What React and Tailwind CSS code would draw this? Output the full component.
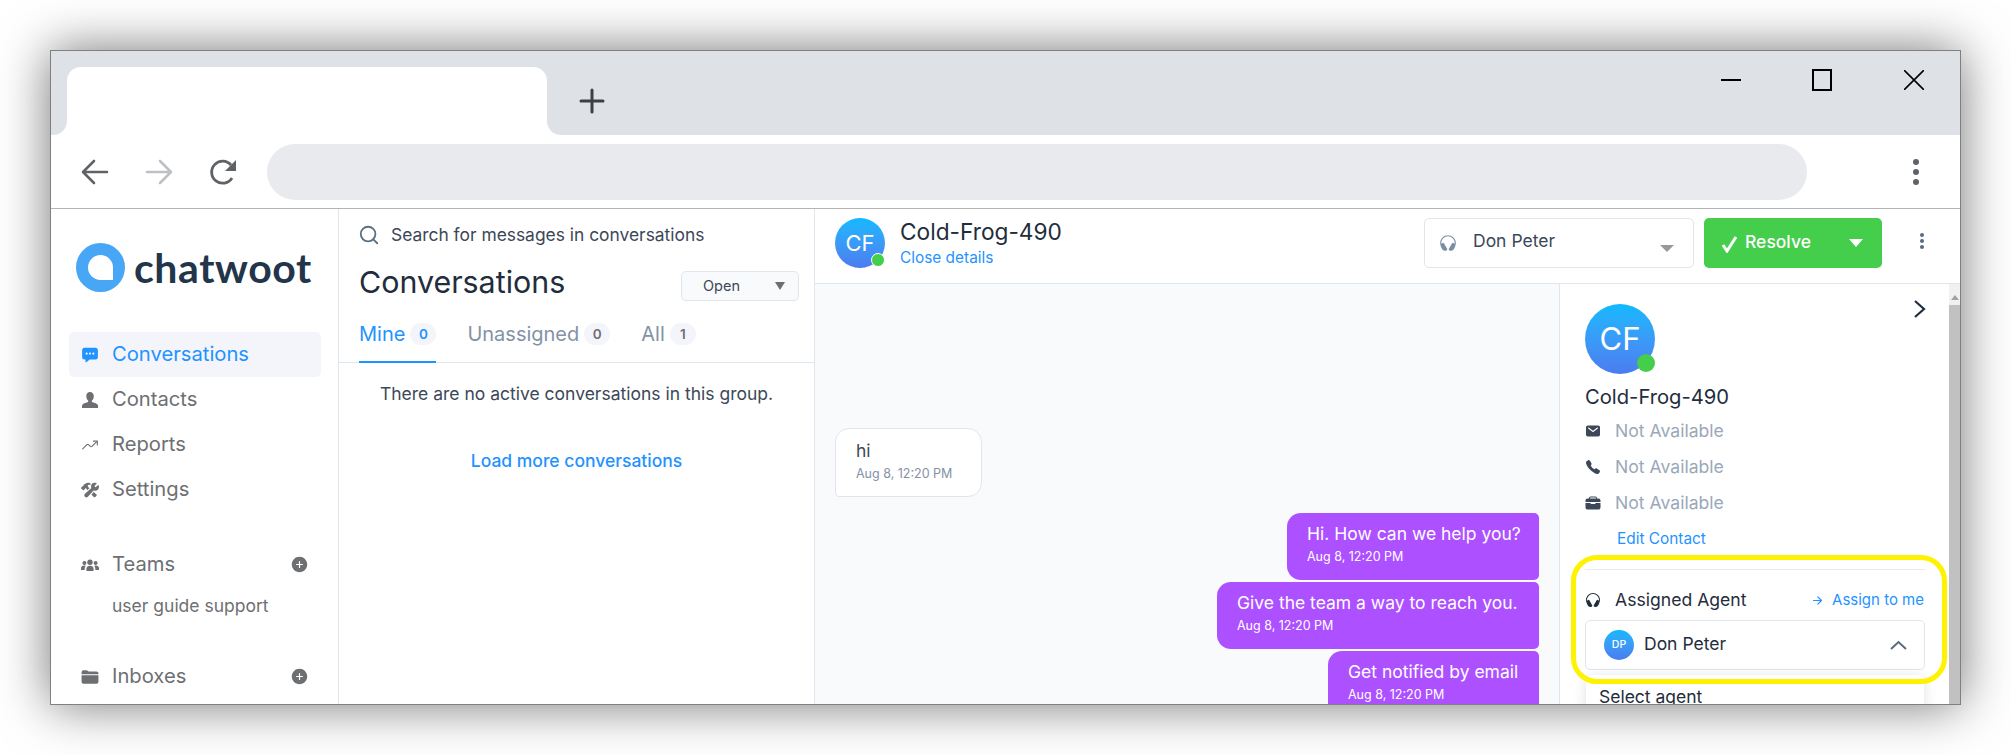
import React from 'react';
import {
  IoChatboxEllipses, IoTrendingUp, IoConstruct, IoFolder, IoAddCircle,
  IoMail, IoCall, IoBriefcase, IoHeadset, IoArrowForward,
} from 'react-icons/io5';
import { LuSearch } from 'react-icons/lu';

function PersonIcon({ className }) {
  return (
    <svg className={className} viewBox="0 0 18 18" fill="currentColor">
      <path d="M9 1c2.400 0 3.800 1.800 3.800 4.200 0 1.800-.8 3.400-1.700 4.300-.4.4-.4 1.200.1 1.600.6.5 5.300 1.300 5.800 3.400.1.6.1 2 .1 2.500H1c0-.5 0-1.900.1-2.500.5-2.100 5.200-2.900 5.800-3.400.5-.4.5-1.200.1-1.600-.9-.9-1.700-2.500-1.700-4.300C5.200 2.800 6.600 1 9 1z" />
    </svg>
  );
}

function TeamIcon({ className }) {
  return (
    <svg className={className} viewBox="0 0 18 18" fill="currentColor">
      <circle cx="9" cy="6.2" r="2.7" />
      <path d="M5.400 15v-2.200c0-1.800 1.600-3 3.600-3s3.600 1.200 3.600 3V15z" />
      <circle cx="3.4" cy="7" r="2" />
      <path d="M0 14v-1.800c0-1.500 1.300-2.600 3.200-2.600.6 0 1 .1 1.400.3-.6.8-.9 1.700-.9 2.900V14z" />
      <circle cx="14.6" cy="7" r="2" />
      <path d="M18 14v-1.800c0-1.500-1.300-2.600-3.200-2.600-.6 0-1 .1-1.400.3.6.8.9 1.700.9 2.900V14z" />
    </svg>
  );
}

const navItems = [
  { label: 'Conversations', Icon: IoChatboxEllipses, active: true },
  { label: 'Contacts', Icon: PersonIcon },
  { label: 'Reports', Icon: IoTrendingUp },
  { label: 'Settings', Icon: IoConstruct },
];

const messages = [
  { text: 'Hi. How can we help you?', w: 'w-[252px]' },
  { text: 'Give the team a way to reach you.', w: 'w-[322px]' },
  { text: 'Get notified by email', w: 'w-[211px]' },
];

function Avatar({ size, text, dot }) {
  return (
    <div className={`relative shrink-0 rounded-full bg-gradient-to-b from-[#0ab9ff] to-[#4a7cef] flex items-center justify-center text-white ${size} ${text}`}>
      CF
      {dot}
    </div>
  );
}

function BrowserChrome() {
  return (
    <div className="shrink-0">
      <div className="h-[16px] bg-[#dee1e6]" />
      <div className="flex h-[68px] bg-white">
        <div className="w-[16px] bg-[#dee1e6] rounded-br-[14px]" />
        <div className="w-[480px] bg-[#dee1e6]">
          <div className="h-full bg-white rounded-t-[14px]" />
        </div>
        <div className="flex-1 bg-[#dee1e6] rounded-bl-[14px] flex">
          <svg className="ml-[32px] mt-[21px] w-[26px] h-[26px]" viewBox="0 0 26 26" fill="none" stroke="#3c4043" strokeWidth="3" strokeLinecap="round">
            <path d="M13 2v22M2 13h22" />
          </svg>
          <div className="ml-auto flex items-start -mt-[16px]">
            <svg className="w-[20px] h-[40px] mt-[9px]" viewBox="0 0 20 40" stroke="#000" strokeWidth="2"><path d="M0 20h20" /></svg>
            <svg className="w-[20px] h-[22px] mt-[18px] ml-[71px]" viewBox="0 0 20 22" fill="none" stroke="#000" strokeWidth="2"><rect x="1" y="1" width="18" height="20" /></svg>
            <svg className="w-[20px] h-[20px] mt-[19px] ml-[72px] mr-[36px]" viewBox="0 0 20 20" stroke="#000" strokeWidth="1.6"><path d="M0 0l20 20M20 0L0 20" /></svg>
          </div>
        </div>
      </div>
      <div className="h-[74px] bg-white border-b border-[#b4b4b4] flex items-center">
        <svg className="ml-[30px] w-[28px] h-[28px]" viewBox="0 0 28 28" fill="none" stroke="#5f6368" strokeWidth="2.6" strokeLinecap="round" strokeLinejoin="round">
          <path d="M26 14H3M13 3L2 14l11 11" />
        </svg>
        <svg className="ml-[36px] w-[28px] h-[28px]" viewBox="0 0 28 28" fill="none" stroke="#bdc1c6" strokeWidth="2.6" strokeLinecap="round" strokeLinejoin="round">
          <path d="M2 14h23M15 3l11 11-11 11" />
        </svg>
        <svg className="ml-[36px] w-[28px] h-[28px]" viewBox="0 0 28 28" fill="none" stroke="#5f6368" strokeWidth="2.8">
          <path d="M23 20a11 11 0 1 1-1-13" />
          <path d="M27 2v11H16z" fill="#5f6368" stroke="none" />
        </svg>
        <div className="ml-[30px] w-[1540px] h-[56px] rounded-full bg-[#e8eaed]" />
        <div className="ml-[106px] flex flex-col gap-[4px]">
          <div className="w-[6px] h-[6px] rounded-full bg-[#5f6368]" />
          <div className="w-[6px] h-[6px] rounded-full bg-[#5f6368]" />
          <div className="w-[6px] h-[6px] rounded-full bg-[#5f6368]" />
        </div>
      </div>
    </div>
  );
}

function Sidebar() {
  return (
    <aside className="w-[288px] shrink-0 border-r border-[#e0e6ed] pl-[18px] pr-[17px]">
      <div className="flex items-center h-[49px] mt-[34px] ml-[7px] gap-[9px]">
        <svg className="w-[49px] h-[49px]" viewBox="0 0 49 49">
          <circle cx="24.5" cy="24.5" r="24.5" fill="#47a7f6" />
          <path d="M24.5 12a12.5 12.5 0 0 1 12.5 12.5V37H24.5a12.5 12.5 0 0 1 0-25z" fill="#fff" />
        </svg>
        <span className="text-[41px] leading-none font-[Lato] font-bold tracking-[0.6px] text-[#22354a]">chatwoot</span>
      </div>
      <nav className="mt-[40px]">
        {navItems.map(({ label, Icon, active }) => (
          <div key={label} className={`h-[45px] flex items-center pl-[12px] rounded-[5px] text-[20.2px] ${active ? 'bg-[#f4f5fb] text-[#1f93ff]' : 'text-[#6e6f73]'}`}>
            <Icon className="w-[18px] h-[18px]" />
            <span className="ml-[13px]">{label}</span>
          </div>
        ))}
      </nav>
      <div className="mt-[30px] h-[45px] flex items-center pl-[12px] text-[20.2px] text-[#6e6f73]">
        <TeamIcon className="w-[18px] h-[18px]" />
        <span className="ml-[13px]">Teams</span>
        <IoAddCircle className="ml-auto mr-[12px] w-[19px] h-[19px]" />
      </div>
      <div className="mt-[5px] ml-[43px] text-[17.5px] leading-[28px] text-[#6e6f73]">user guide support</div>
      <div className="mt-[34px] h-[45px] flex items-center pl-[12px] text-[20.2px] text-[#6e6f73]">
        <IoFolder className="w-[18px] h-[18px]" />
        <span className="ml-[13px]">Inboxes</span>
        <IoAddCircle className="ml-auto mr-[12px] w-[19px] h-[19px]" />
      </div>
    </aside>
  );
}

function Tab({ label, count, active }) {
  return (
    <div className={`h-[57px] flex items-start pt-[13px] border-b-2 -mb-px ${active ? 'border-[#1f93ff]' : 'border-transparent'}`}>
      <span className={`text-[20px] leading-[30px] ${active ? 'text-[#1f93ff]' : 'text-[#8492a6]'}`}>{label}</span>
      <span className={`ml-[5px] mt-[4px] w-[26px] h-[22px] rounded-full bg-[#f4f5fb] flex items-center justify-center text-[13.5px] font-semibold ${active ? 'text-[#1f93ff]' : 'text-[#6e6f73]'}`}>{count}</span>
    </div>
  );
}

function ConversationList() {
  return (
    <section className="w-[476px] shrink-0 border-r border-[#e0e6ed]">
      <div className="flex items-center h-[52px] pl-[19px]">
        <LuSearch className="w-[22px] h-[22px] text-[#5a7184]" />
        <span className="ml-[11px] text-[17.4px] text-[#3c4858]">Search for messages in conversations</span>
      </div>
      <div className="flex items-center justify-between h-[47px] pl-[20px] pr-[15px] -mt-[2px]">
        <h1 className="text-[30.4px] text-[#1f2d3d]">Conversations</h1>
        <div className="relative mt-[6px] w-[118px] h-[30px] rounded-[5px] border border-[#e0e6ed] bg-[#f9fafc] flex items-center pl-[21px] text-[14.5px] text-[#3c4858]">
          Open
          <div className="absolute right-[13px] top-[10px] w-0 h-0 border-l-[5px] border-r-[5px] border-t-[8px] border-l-transparent border-r-transparent border-t-[#6e6f73]" />
        </div>
      </div>
      <div className="flex gap-[31px] pl-[20px] h-[57px] border-b border-[#e0e6ed]">
        <Tab label="Mine" count="0" active />
        <Tab label="Unassigned" count="0" />
        <Tab label="All" count="1" />
      </div>
      <p className="mt-[17px] text-center text-[17.5px] leading-[28px] text-[#3c4858]">There are no active conversations in this group.</p>
      <p className="mt-[39px] text-center text-[17.5px] leading-[28px] font-medium text-[#1f93ff]">Load more conversations</p>
    </section>
  );
}

function ChatHeader() {
  return (
    <header className="h-[75px] shrink-0 border-b border-[#e0e6ed] flex items-start pt-[9px] pl-[20px]">
      <Avatar size="w-[50px] h-[50px]" text="text-[22px]" dot={<div className="absolute right-0 bottom-[1px] w-[14px] h-[14px] rounded-full bg-[#44ce4b] border border-white" />} />
      <div className="ml-[15px]">
        <div className="text-[22.7px] leading-[28px] text-[#1f2d3d]">Cold-Frog-490</div>
        <div className="text-[15.4px] leading-[20px] mt-[2px] text-[#1f93ff]">Close details</div>
      </div>
      <div className="ml-auto relative w-[270px] h-[50px] rounded-[5px] border border-[#e0e6ed] flex items-center pl-[14px] text-[17.5px] text-[#3c4858]">
        <IoHeadset className="w-[18px] h-[18px] text-[#7b8da3]" />
        <span className="ml-[16px] -mt-[3px]">Don Peter</span>
        <div className="absolute right-[19px] top-[26px] w-0 h-0 border-l-[7px] border-r-[7px] border-t-[7px] border-l-transparent border-r-transparent border-t-[#999]" />
      </div>
      <div className="ml-[10px] relative w-[178px] h-[50px] rounded-[5px] bg-[#44ce4b] flex items-center pl-[17px] text-white font-medium text-[17.5px]">
        <svg className="w-[18px] h-[18px] mt-[2px]" viewBox="0 0 18 18" fill="none" stroke="#fff" strokeWidth="3"><path d="M2 10l4 6 9-14" /></svg>
        <span className="ml-[6px] -mt-[2px]">Resolve</span>
        <div className="absolute right-[19px] top-[21px] w-0 h-0 border-l-[7px] border-r-[7px] border-t-[8px] border-l-transparent border-r-transparent border-t-white" />
      </div>
      <div className="ml-[38px] mr-[36px] flex flex-col gap-[2px] mt-[15px]">
        <div className="w-[4px] h-[4px] rounded-full bg-[#5a6b80]" />
        <div className="w-[4px] h-[4px] rounded-full bg-[#5a6b80]" />
        <div className="w-[4px] h-[4px] rounded-full bg-[#5a6b80]" />
      </div>
    </header>
  );
}

function Messages() {
  return (
    <div className="flex-1 bg-[#f9fafc] pt-[144px] pl-[20px] pr-[20px]">
      <div className="w-[147px] h-[69px] rounded-[14px] rounded-bl-[4px] border border-[#e0e6ed] bg-white pl-[20px] pt-[9px]">
        <div className="text-[17.5px] leading-[26px] text-[#3c4858]">hi</div>
        <div className="text-[12.5px] leading-[20px] text-[#8492a6]">Aug 8, 12:20 PM</div>
      </div>
      <div className="mt-[16px] flex flex-col items-end gap-[2px]">
        {messages.map((m) => (
          <div key={m.text} className={`h-[67px] rounded-[14px] rounded-r-[5px] bg-[#ad50ff] pl-[20px] pt-[8px] text-white ${m.w}`}>
            <div className="text-[17.5px] leading-[26px] whitespace-nowrap">{m.text}</div>
            <div className="text-[12.5px] leading-[20px]">Aug 8, 12:20 PM</div>
          </div>
        ))}
      </div>
    </div>
  );
}

function ContactPanel() {
  return (
    <div className="relative w-[401px] shrink-0 flex border-l border-[#e0e6ed] bg-white">
      <div className="w-[389px] pl-[25px] pr-[24px] pt-[20px]">
        <svg className="absolute left-[353px] top-[15px] w-[14px] h-[20px]" viewBox="0 0 14 20" fill="none" stroke="#1f2d3d" strokeWidth="2.2"><path d="M2 2l9 8-9 8" /></svg>
        <Avatar size="w-[70px] h-[70px]" text="text-[31px]" dot={<div className="absolute right-0 bottom-[2px] w-[18px] h-[18px] rounded-full bg-[#44ce4b]" />} />
        <div className="mt-[10px] mb-[3px] text-[20.2px] leading-[26px] text-[#1f2d3d]">Cold-Frog-490</div>
        {[IoMail, IoCall, IoBriefcase].map((Icon, i) => (
          <div key={i} className="h-[36px] flex items-center text-[17.6px] text-[#9aa8b9]">
            <span className="w-[30px]"><Icon className="w-[16px] h-[16px] text-[#3c4858]" /></span>
            Not Available
          </div>
        ))}
        <div className="ml-[32px] mt-[8px] text-[15.4px] leading-[20px] text-[#1f93ff]">Edit Contact</div>
        <div className="mt-[20px] border-t border-[#e7ebf1]" />
        <div className="mt-[20px] flex items-center h-[20px] text-[17.6px]">
          <span className="w-[30px]"><IoHeadset className="w-[16px] h-[16px] text-[#1f2d3d]" /></span>
          <span className="text-[#1f2d3d]">Assigned Agent</span>
          <IoArrowForward className="ml-auto w-[13px] h-[13px] text-[#1f93ff]" />
          <span className="ml-[8px] mr-[1px] text-[15px] text-[#1f93ff]">Assign to me</span>
        </div>
        <div className="mt-[10px] h-[50px] rounded-[5px] border border-[#e0e6ed] flex items-center pl-[18px] pr-[17px]">
          <div className="w-[30px] h-[30px] rounded-full bg-gradient-to-b from-[#0ab9ff] to-[#4a7cef] text-white text-[10.5px] font-medium flex items-center justify-center">DP</div>
          <span className="ml-[10px] -mt-[2px] text-[17.5px] text-[#1f2d3d]">Don Peter</span>
          <svg className="ml-auto w-[17px] h-[10px]" viewBox="0 0 17 10" fill="none" stroke="#5a6b80" strokeWidth="2"><path d="M1 9l7.5-7L16 9" /></svg>
        </div>
        <div className="mt-[5px] h-[60px] mx-px rounded-t-[6px] bg-white shadow-[0_2px_14px_rgba(0,0,0,0.12)] pl-[13px] pt-[9px] text-[17.5px] leading-[26px] text-[#1f2d3d]">Select agent</div>
      </div>
      <div className="absolute left-[11px] top-[271px] w-[376px] h-[129px] rounded-[26px] border-[5px] border-[#fff200]" />
      <div className="w-[11px] bg-[#f1f1f1] flex flex-col items-center">
        <div className="mt-[11px] w-0 h-0 border-l-[4px] border-r-[4px] border-b-[5px] border-l-transparent border-r-transparent border-b-[#a3a3a3]" />
        <div className="mt-[5px] w-full flex-1 bg-[#c1c1c1]" />
      </div>
    </div>
  );
}

export default function App() {
  return (
    <div className="h-screen bg-white pt-[50px] pl-[50px] font-[Inter,sans-serif] overflow-hidden">
      <div className="w-[1911px] h-[655px] flex flex-col border border-[#808080] overflow-hidden bg-white shadow-[0_0_48px_rgba(0,0,0,0.55)]">
        <BrowserChrome />
        <div className="flex-1 flex min-h-0">
          <Sidebar />
          <ConversationList />
          <main className="flex-1 min-w-0 flex flex-col">
            <ChatHeader />
            <div className="flex-1 flex min-h-0">
              <Messages />
              <ContactPanel />
            </div>
          </main>
        </div>
      </div>
    </div>
  );
}
